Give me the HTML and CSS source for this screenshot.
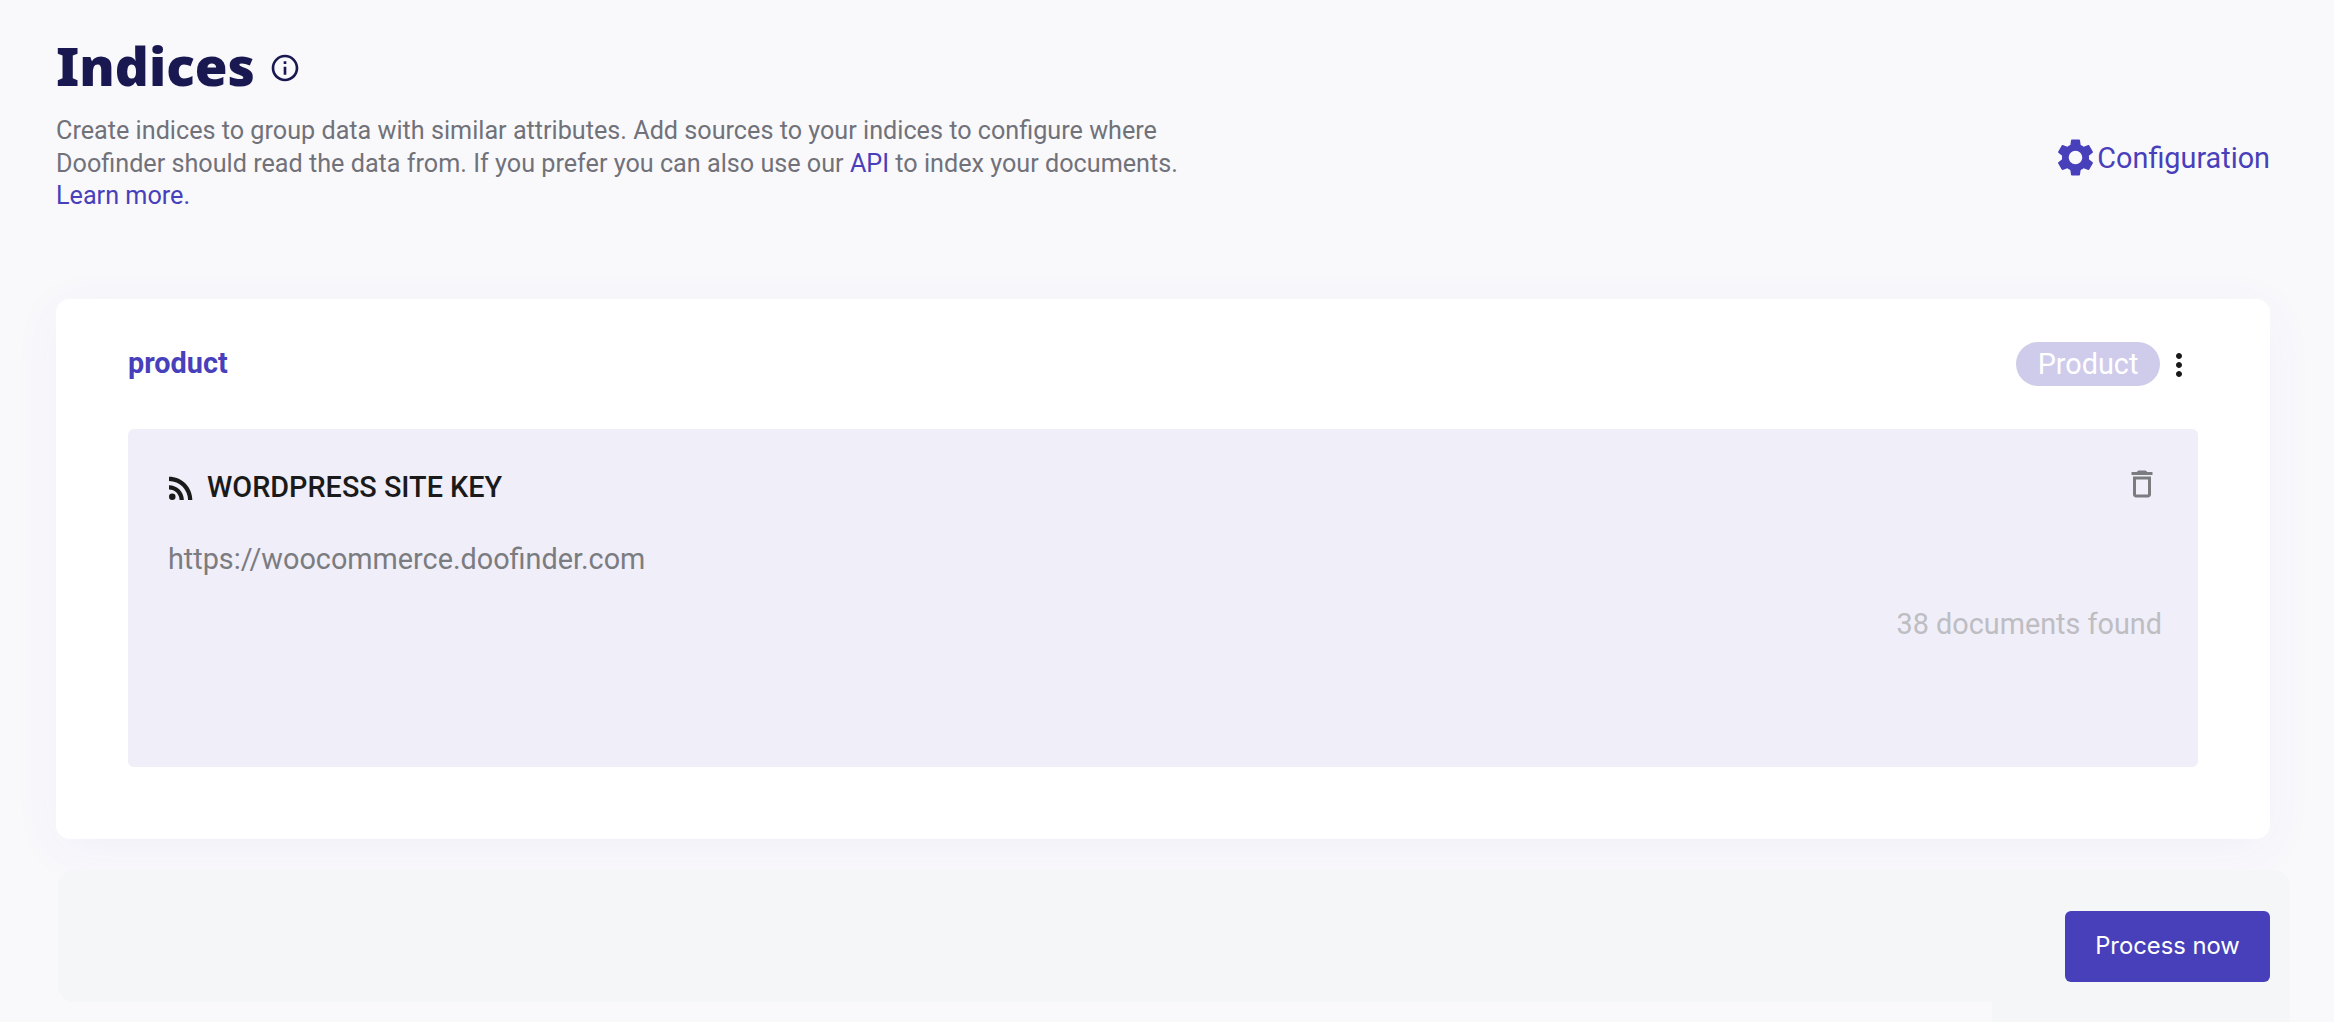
FILE: index.html
```html
<!DOCTYPE html>
<html lang="en">

<head>
    <meta charset="UTF-8">
    <title>Indices</title>
    <link rel="stylesheet" href="styles.css">
</head>

<body>
    <div class="page">
        <div class="page_header">
            <div class="page_intro">
                <h1 class="page_title">
                    Indices
                    <svg class="icon_info" viewBox="0 0 24 24"><path d="M11 7h2v2h-2zm0 4h2v6h-2zm1-9C6.48 2 2 6.48 2 12s4.48 10 10 10 10-4.48 10-10S17.52 2 12 2zm0 18c-4.41 0-8-3.59-8-8s3.59-8 8-8 8 3.59 8 8-3.59 8-8 8z"/></svg>
                </h1>
                <p class="page_text">
                    Create indices to group data with similar attributes. Add sources to your indices to configure where<br>
                    Doofinder should read the data from. If you prefer you can also use our <a href="#">API</a> to index your documents.<br>
                    <a href="#">Learn more.</a>
                </p>
            </div>
            <a class="config_link" href="#">
                <svg class="icon_gear" viewBox="0 0 24 24"><path d="M19.14 12.94c.04-.3.06-.61.06-.94 0-.32-.02-.64-.07-.94l2.03-1.58c.18-.14.23-.41.12-.61l-1.92-3.32c-.12-.22-.37-.29-.59-.22l-2.39.96c-.5-.38-1.03-.7-1.62-.94l-.36-2.54c-.04-.24-.24-.41-.48-.41h-3.84c-.24 0-.43.17-.47.41l-.36 2.54c-.59.24-1.13.57-1.62.94l-2.39-.96c-.22-.08-.47 0-.59.22L2.74 8.87c-.12.21-.08.47.12.61l2.03 1.58c-.05.3-.09.63-.09.94s.02.64.07.94l-2.03 1.58c-.18.14-.23.41-.12.61l1.92 3.32c.12.22.37.29.59.22l2.39-.96c.5.38 1.03.7 1.62.94l.36 2.54c.05.24.24.41.48.41h3.84c.24 0 .44-.17.47-.41l.36-2.54c.59-.24 1.13-.56 1.62-.94l2.39.96c.22.08.47 0 .59-.22l1.92-3.32c.12-.22.07-.47-.12-.61l-2.01-1.58zM12 15.6c-1.98 0-3.6-1.62-3.6-3.6s1.62-3.6 3.6-3.6 3.6 1.62 3.6 3.6-1.62 3.6-3.6 3.6z"/></svg>
                Configuration
            </a>
        </div>

        <!-- index card -->
        <div class="index_card">
            <div class="index_head">
                <a class="index_name" href="#">product</a>
                <div class="index_tools">
                    <span class="index_badge">Product</span>
                    <svg class="icon_more" viewBox="0 0 24 24"><path d="M12 8c1.1 0 2-.9 2-2s-.9-2-2-2-2 .9-2 2 .9 2 2 2zm0 2c-1.1 0-2 .9-2 2s.9 2 2 2 2-.9 2-2-.9-2-2-2zm0 6c-1.1 0-2 .9-2 2s.9 2 2 2 2-.9 2-2-.9-2-2-2z"/></svg>
                </div>
            </div>

            <div class="source_box">
                <div class="source_head">
                    <div class="source_title">
                        <svg class="icon_rss" viewBox="0 0 24 24"><circle cx="6.18" cy="17.82" r="2.18"/><path d="M4 4.44v2.83c7.03 0 12.73 5.7 12.73 12.73h2.83c0-8.59-6.97-15.56-15.56-15.56zm0 5.66v2.83c3.9 0 7.07 3.17 7.07 7.07h2.83c0-5.47-4.43-9.9-9.9-9.9z"/></svg>
                        WORDPRESS SITE KEY
                    </div>
                    <svg class="icon_trash" viewBox="0 0 24 24"><path d="M6 19c0 1.1.9 2 2 2h8c1.1 0 2-.9 2-2V7H6v12zM8 9h8v10H8V9zm7.5-5l-1-1h-5l-1 1H5v2h14V4z"/></svg>
                </div>
                <div class="source_url">https://woocommerce.doofinder.com</div>
                <div class="source_count">38 documents found</div>
            </div>
        </div>

        <div class="action_bar">
            <button class="process_btn" type="button">Process now</button>
        </div>
    </div>
</body>

</html>
```

FILE: styles.css
```css
html,
body {
    margin: 0;
    height: 100%;
    overflow: hidden;
    background-color: #F9F9FC;
}

* {
    box-sizing: border-box;
}

a {
    color: #4840BA;
    text-decoration: none;
}

.page {
    padding: 30px 64px 0 56px;
    font-family: Roboto, sans-serif;
}

/* header */

.page_header {
    height: 269px;
    display: flex;
    justify-content: space-between;
    align-items: flex-start;
}

.page_title {
    margin: 0;
    height: 70px;
    display: flex;
    align-items: center;
    gap: 14px;
    font-family: "Noto Sans", sans-serif;
    font-size: 53px;
    font-weight: 900;
    color: #1A1850;
}

.icon_info {
    width: 32px;
    height: 32px;
    margin-top: 6px;
    fill: #1A1850;
}

.page_text {
    margin: 15px 0 0;
    font-size: 25.2px;
    line-height: 32.5px;
    color: #717279;
}

.config_link {
    margin-top: 105px;
    display: flex;
    align-items: center;
    gap: 3px;
    font-size: 28.8px;
    line-height: 44px;
}

.icon_gear {
    width: 45px;
    height: 45px;
    margin-right: -4px;
    fill: #4840BA;
}

/* card */

.index_card {
    height: 540px;
    padding: 0 72px;
    background-color: #fff;
    border-radius: 14px;
    box-shadow: 0 10px 50px rgba(72, 64, 186, 0.05);
}

.index_head {
    height: 130px;
    display: flex;
    justify-content: space-between;
    align-items: center;
}

.index_name {
    margin-top: -2px;
    font-size: 28.8px;
    font-weight: 700;
}

.index_tools {
    display: flex;
    align-items: center;
}

.index_badge {
    width: 144px;
    height: 44px;
    border-radius: 22px;
    background-color: #CFCCEB;
    color: #fff;
    font-size: 28.8px;
    line-height: 44px;
    text-align: center;
}

.icon_more {
    width: 36px;
    height: 36px;
    margin: 2px 1px 0;
    fill: #1a1a1a;
}

.source_box {
    height: 338px;
    padding: 37px 38px 0 40px;
    background-color: #F0EEF9;
    border-radius: 6px;
}

.source_head {
    display: flex;
    justify-content: space-between;
    align-items: flex-start;
}

.source_title {
    margin-top: -1px;
    display: flex;
    align-items: center;
    gap: 8px;
    font-size: 28.8px;
    font-weight: 500;
    line-height: 44px;
    color: #1a1a1a;
}

.source_title .icon_rss {
    margin: 1px 0 0 -5px;
    width: 36px;
    height: 36px;
    fill: #1a1a1a;
}

.icon_trash {
    width: 36px;
    height: 36px;
    fill: #7B7C80;
}

.source_url {
    margin-top: 30px;
    font-size: 28.8px;
    line-height: 40px;
    color: #7B7C80;
}

.source_count {
    margin: 25px -2px 0 0;
    font-size: 28.8px;
    line-height: 40px;
    text-align: right;
    color: #BDBDC2;
}

/* bottom bar */

.action_bar {
    position: relative;
    margin: 31px -20px 0 2px;
    height: 132px;
    padding: 41px 20px 0 0;
    display: flex;
    justify-content: flex-end;
    align-items: flex-start;
    background-color: #F5F6F8;
    border-radius: 16px 16px 0 16px;
}

.action_bar::after {
    content: "";
    position: absolute;
    top: 100%;
    right: 0;
    width: 298px;
    height: 20px;
    background-color: #F5F6F8;
}

.process_btn {
    width: 205px;
    height: 71px;
    padding-bottom: 4px;
    border: 0;
    border-radius: 6px;
    background-color: #4840BA;
    color: #fff;
    font-family: Inter, sans-serif;
    font-size: 23.8px;
    cursor: pointer;
}
```
